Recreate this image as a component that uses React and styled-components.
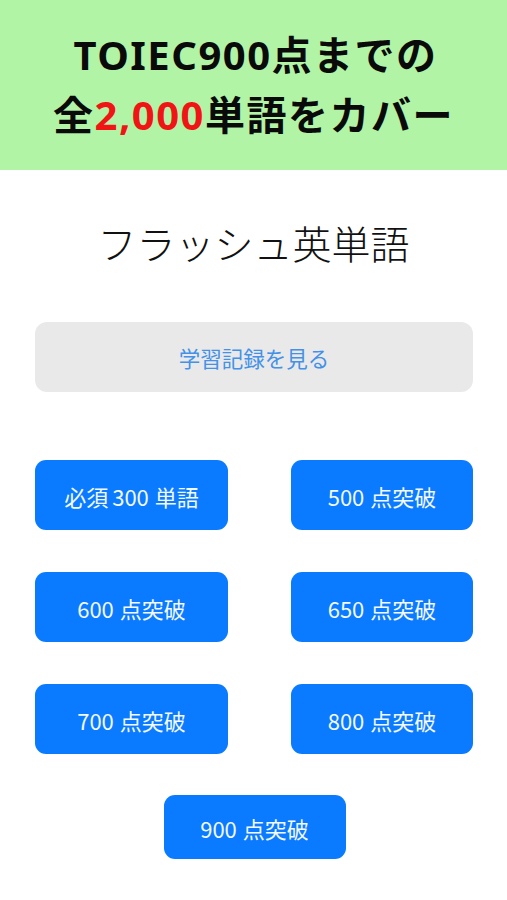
import React from "react";
import styled, { createGlobalStyle } from "styled-components";

const GlobalStyle = createGlobalStyle`
  html, body { margin: 0; padding: 0; background: #ffffff; }
  body { font-family: "Noto Sans CJK JP", "Noto Sans", sans-serif; }
`;

const Page = styled.div`
  width: 507px;
  min-height: 900px;
  background: #ffffff;
  display: flex;
  flex-direction: column;
`;

const Banner = styled.header`
  height: 170px;
  background: #b1f4a6;
  display: flex;
  flex-direction: column;
  align-items: center;
  justify-content: center;
  font-family: "Noto Sans", "Noto Sans CJK JP", sans-serif;
  font-weight: 700;
  font-size: 40px;
  line-height: 60px;
  letter-spacing: 1.5px;
  color: #0a0a0a;
`;

const BannerLine = styled.div`
  white-space: nowrap;
  padding-left: ${(p) => p.$shift || 0}px;
`;

const Red = styled.span`
  color: #f01414;
`;

const Title = styled.h1`
  margin: 49px 0 0;
  text-align: center;
  font-family: "Noto Sans CJK JP", sans-serif;
  font-weight: 300;
  font-size: 39px;
  line-height: 46px;
  color: #111111;
  letter-spacing: 0;
`;

const Body = styled.main`
  padding: 0 34px 0 35px;
  display: flex;
  flex-direction: column;
`;

const HistoryButton = styled.button`
  margin-top: 57px;
  height: 70px;
  border: none;
  border-radius: 12px;
  background: #e9e9e9;
  color: #4391e8;
  font-family: "Noto Sans CJK JP", sans-serif;
  font-size: 21.5px;
  cursor: pointer;
`;

const Grid = styled.div`
  margin-top: 68px;
  display: grid;
  grid-template-columns: 193px 182px;
  justify-content: space-between;
  row-gap: 42px;
`;

const LevelButton = styled.button`
  height: ${(p) => (p.$short ? 64 : 70)}px;
  width: ${(p) => (p.$w ? `${p.$w}px` : "100%")};
  border: none;
  border-radius: 11px;
  background: #0a7bff;
  color: #f4f8ff;
  font-family: "Noto Sans CJK JP", sans-serif;
  font-size: 22px;
  padding: 2px 0 0;
  display: flex;
  align-items: center;
  justify-content: center;
  cursor: pointer;
`;

const Num = styled.span`
  margin-left: ${(p) => (p.$both ? "4px" : "0")};
  margin-right: 6px;
`;

const Last = styled.div`
  margin-top: 41px;
  display: flex;
  justify-content: center;
  padding-left: 1px;
`;

const levels = [
  { pre: "必須", num: "300", post: "単語" },
  { num: "500", post: "点突破" },
  { num: "600", post: "点突破" },
  { num: "650", post: "点突破" },
  { num: "700", post: "点突破" },
  { num: "800", post: "点突破" },
];

function Label({ pre, num, post }) {
  return (
    <>
      {pre}
      <Num $both={!!pre}>{num}</Num>
      {post}
    </>
  );
}

export default function App() {
  return (
    <Page>
      <GlobalStyle />
      <Banner>
        <BannerLine $shift={4}>TOIEC900点までの</BannerLine>
        <BannerLine>
          全<Red>2,000</Red>単語をカバー
        </BannerLine>
      </Banner>
      <Title>フラッシュ英単語</Title>
      <Body>
        <HistoryButton>学習記録を見る</HistoryButton>
        <Grid>
          {levels.map((l) => (
            <LevelButton key={l.num}>
              <Label {...l} />
            </LevelButton>
          ))}
        </Grid>
        <Last>
          <LevelButton $short $w={182}>
            <Label num="900" post="点突破" />
          </LevelButton>
        </Last>
      </Body>
    </Page>
  );
}
